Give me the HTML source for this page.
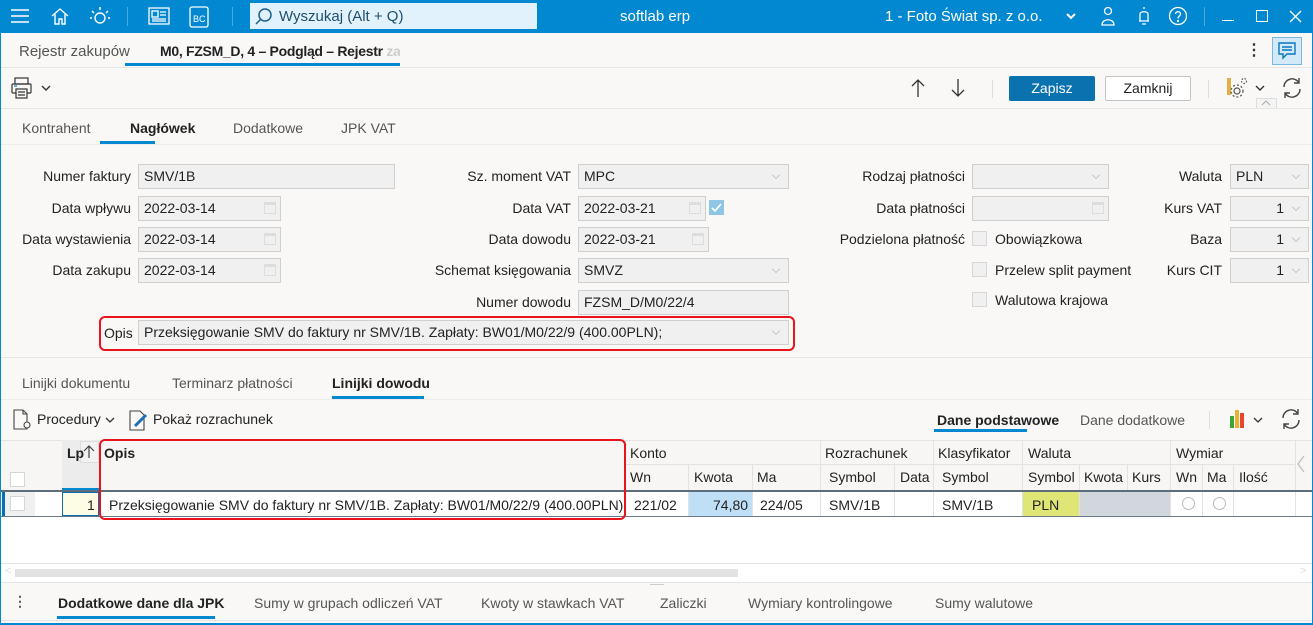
<!DOCTYPE html>
<html><head><meta charset="utf-8"><style>
*{box-sizing:border-box;margin:0;padding:0}
body{width:1313px;height:625px;overflow:hidden;background:#f9f8f7;font-family:"Liberation Sans",sans-serif;font-size:14px;color:#222;position:relative}
.a{position:absolute}
.t{position:absolute;white-space:nowrap}
.lbl{position:absolute;white-space:nowrap;text-align:right}
.f{position:absolute;background:#f0f0f0;border:1px solid #cfcfcf;height:25px;padding:3px 5px;white-space:nowrap;color:#222}
.dd:after{content:"";position:absolute;right:9px;top:7px;width:5px;height:5px;border-right:1px solid #c8c8c8;border-bottom:1px solid #c8c8c8;transform:rotate(45deg)}
.cal{position:absolute;right:4px;top:5px;width:12px;height:12px;border:1px solid #ddd;border-top:3px solid #ddd}
.cb{position:absolute;width:15px;height:15px;border:1px solid #d6d6d6;background:#f0f0f0}
.gray{color:#555}
.ul{position:absolute;height:3px;background:#0288d1}
.hl{position:absolute;height:1px;background:#e2e2e2}
.vl{position:absolute;width:1px;background:#e2e2e2}
</style></head><body>
<div class="a" style="left:0;top:0;width:1313px;height:33px;background:#0288d1"></div>
<svg class="a" style="left:10px;top:7px" width="20" height="18" stroke="#fff" stroke-width="1.6" fill="none"><path d="M1 3H19M1 9H19M1 15H19"/></svg>
<svg class="a" style="left:50px;top:6px" width="20" height="20" stroke="#fff" stroke-width="1.4" fill="none"><path d="M2 10L10 3L18 10M5 8V18H9V13H12V18H15V8"/></svg>
<svg class="a" style="left:89px;top:5px" width="22" height="22" stroke="#fff" stroke-width="1.4" fill="none"><circle cx="11" cy="13" r="5"/><path d="M11 2V5M3 6L5 8M19 6L17 8M1 13H3M19 13H21"/></svg>
<div class="a" style="left:127px;top:7px;width:1px;height:19px;background:#4aa9dd"></div>
<svg class="a" style="left:148px;top:6px" width="22" height="20" stroke="#fff" stroke-width="1.3" fill="none"><rect x="1" y="2" width="20" height="16"/><rect x="4" y="5" width="6" height="6"/><path d="M12 6H18M12 9H18M4 13H18M4 15H18"/></svg>
<svg class="a" style="left:189px;top:5px" width="22" height="24" stroke="#fff" stroke-width="1.3" fill="none"><rect x="1" y="2" width="18" height="20" rx="2"/><text x="4" y="17" fill="#fff" stroke="none" font-size="9" font-family="Liberation Sans">BC</text></svg>
<div class="a" style="left:232px;top:7px;width:1px;height:19px;background:#4aa9dd"></div>
<div class="a" style="left:250px;top:3px;width:287px;height:26px;background:#e1f2fc"></div>
<svg class="a" style="left:255px;top:7px" width="18" height="18" stroke="#1a5f8c" stroke-width="1.5" fill="none"><circle cx="10" cy="8" r="6"/><path d="M6 12L1 17"/></svg>
<div class="t" style="left:279px;top:8px;color:#1e4e6e;font-size:15px">Wyszukaj (Alt + Q)</div>
<div class="t" style="left:620px;top:8px;color:#fff;font-size:15px">softlab erp</div>
<div class="t" style="left:885px;top:8px;color:#fff;font-size:15px">1 - Foto Świat sp. z o.o.</div>
<svg class="a" style="left:1066px;top:12px" width="10" height="8" stroke="#fff" stroke-width="2" fill="none"><path d="M1 2L5 6L9 2"/></svg>
<svg class="a" style="left:1100px;top:5px" width="16" height="22" stroke="#fff" stroke-width="1.3" fill="none"><circle cx="8" cy="6" r="3.5"/><path d="M2 20C2 13 14 13 14 20Z"/></svg>
<svg class="a" style="left:1136px;top:5px" width="16" height="22" stroke="#fff" stroke-width="1.3" fill="none"><path d="M8 2V4M4 16V9C4 6 12 6 12 9V16H3M13 16H12M6 19H10"/></svg>
<svg class="a" style="left:1168px;top:6px" width="20" height="20" stroke="#fff" stroke-width="1.3" fill="none"><circle cx="10" cy="10" r="8.5"/><path d="M7.5 8C7.5 5 12.5 5 12.5 8C12.5 10 10 10 10 12.5"/><circle cx="10" cy="15" r=".5"/></svg>
<div class="a" style="left:1204px;top:7px;width:1px;height:19px;background:#4aa9dd"></div>
<div class="a" style="left:1222px;top:20px;width:12px;height:1px;background:#fff"></div>
<div class="a" style="left:1256px;top:10px;width:12px;height:12px;border:1.3px solid #fff"></div>
<svg class="a" style="left:1289px;top:10px" width="13" height="13" stroke="#fff" stroke-width="1.3"><path d="M1 1L12 12M12 1L1 12"/></svg>
<div class="a" style="left:0;top:33px;width:1px;height:592px;background:#0288d1"></div>
<div class="a" style="left:1312px;top:33px;width:1px;height:592px;background:#0288d1"></div>
<div class="a" style="left:0;top:623px;width:1313px;height:2px;background:#0288d1"></div>
<div class="t gray" style="left:19px;top:43px;font-size:15px">Rejestr zakupów</div>
<div class="t" style="left:160px;top:43px;width:240px;overflow:hidden;font-size:14px;font-weight:bold;color:#222;letter-spacing:-0.3px">M0, FZSM_D, 4 – Podgląd – Rejestr <span style="color:#ccc">zak</span></div>
<div class="ul" style="left:125px;top:63px;width:275px"></div>
<div class="hl" style="left:1px;top:67px;width:1311px;background:#e6e6e6"></div>
<div class="t" style="left:1246px;top:40px;font-size:16px;color:#333;font-weight:bold">⋮</div>
<div class="a" style="left:1272px;top:37px;width:30px;height:28px;background:#d3e9f7;border:1px solid #7bb8dd"></div>
<svg class="a" style="left:1278px;top:42px" width="18" height="18" stroke="#0a77bf" stroke-width="1.4" fill="none"><path d="M1 1H17V12H9L5 16V12H1Z M4 5H14M4 8H14"/></svg>
<svg class="a" style="left:10px;top:76px" width="24" height="24" stroke="#333" stroke-width="1.2" fill="none"><rect x="5" y="2" width="13" height="6"/><rect x="2" y="8" width="19" height="9" rx="1"/><rect x="6" y="13" width="11" height="9" fill="#f9f8f7"/><path d="M8 16H15M8 19H15"/><path d="M4 10H7" stroke="#0288d1"/></svg>
<svg class="a" style="left:41px;top:84px" width="10" height="8" stroke="#333" stroke-width="1.4" fill="none"><path d="M1 2L5 6L9 2"/></svg>
<svg class="a" style="left:911px;top:78px" width="14" height="20" stroke="#333" stroke-width="1.3" fill="none"><path d="M7 19V2M1 8L7 2L13 8"/></svg>
<svg class="a" style="left:951px;top:78px" width="14" height="20" stroke="#333" stroke-width="1.3" fill="none"><path d="M7 1V18M1 12L7 18L13 12"/></svg>
<div class="a" style="left:992px;top:80px;width:1px;height:18px;background:#ddd"></div>
<div class="a" style="left:1009px;top:76px;width:86px;height:25px;background:#0b72b0;border-radius:2px;color:#fff;text-align:center;line-height:25px;font-size:14px">Zapisz</div>
<div class="a" style="left:1105px;top:76px;width:86px;height:25px;background:#fff;border:1px solid #c4c4c4;border-radius:2px;color:#222;text-align:center;line-height:23px;font-size:14px">Zamknij</div>
<div class="a" style="left:1208px;top:80px;width:1px;height:18px;background:#ddd"></div>
<div class="a" style="left:1227px;top:78px;width:4px;height:17px;background:#e2b046"></div>
<svg class="a" style="left:1226px;top:76px" width="22" height="24" stroke="#555" stroke-width="1.2" fill="none"><circle cx="11" cy="15" r="3"/><circle cx="11" cy="15" r="6" stroke-dasharray="2 2"/><circle cx="18" cy="5" r="2.5" stroke-dasharray="1.5 1.5"/></svg>
<svg class="a" style="left:1255px;top:84px" width="10" height="8" stroke="#333" stroke-width="1.4" fill="none"><path d="M1 2L5 6L9 2"/></svg>
<svg class="a" style="left:1280px;top:76px" width="24" height="24" stroke="#444" stroke-width="1.4" fill="none"><path d="M4 11A8 8 0 0 1 19 7M20 13A8 8 0 0 1 5 17M19 2V7H14M5 22V17H10"/></svg>
<div class="a" style="left:1256px;top:98px;width:21px;height:10px;background:#f4f4f4;border:1px solid #ddd;border-bottom:none"></div>
<svg class="a" style="left:1261px;top:100px" width="10" height="6" stroke="#aaa" fill="none"><path d="M1 5L5 1L9 5"/></svg>
<div class="hl" style="left:1px;top:108px;width:1311px;background:#e6e6e6"></div>
<div class="t gray" style="left:22px;top:120px">Kontrahent</div>
<div class="t" style="left:130px;top:120px;font-weight:bold">Nagłówek</div>
<div class="t gray" style="left:233px;top:120px">Dodatkowe</div>
<div class="t gray" style="left:341px;top:120px">JPK VAT</div>
<div class="ul" style="left:100px;top:141px;width:55px"></div>
<div class="hl" style="left:1px;top:144px;width:1311px;background:#ececec"></div>
<div class="lbl" style="right:1182px;top:168px">Numer faktury</div>
<div class="f" style="left:138px;top:164px;width:257px">SMV/1B</div>
<div class="lbl" style="right:1182px;top:200px">Data wpływu</div>
<div class="f" style="left:138px;top:196px;width:143px">2022-03-14<span class="cal"></span></div>
<div class="lbl" style="right:1182px;top:231px">Data wystawienia</div>
<div class="f" style="left:138px;top:227px;width:143px">2022-03-14<span class="cal"></span></div>
<div class="lbl" style="right:1182px;top:262px">Data zakupu</div>
<div class="f" style="left:138px;top:258px;width:143px">2022-03-14<span class="cal"></span></div>
<div class="lbl" style="right:742px;top:168px">Sz. moment VAT</div>
<div class="f dd" style="left:578px;top:164px;width:211px">MPC</div>
<div class="lbl" style="right:742px;top:200px">Data VAT</div>
<div class="f" style="left:578px;top:196px;width:128px">2022-03-21<span class="cal"></span></div>
<div class="a" style="left:709px;top:200px;width:15px;height:15px;background:#8fc6e6"></div>
<svg class="a" style="left:710px;top:201px" width="13" height="13" stroke="#fff" stroke-width="1.6" fill="none"><path d="M2 7L5 10L11 3"/></svg>
<div class="lbl" style="right:742px;top:231px">Data dowodu</div>
<div class="f" style="left:578px;top:227px;width:131px">2022-03-21<span class="cal"></span></div>
<div class="lbl" style="right:742px;top:262px">Schemat księgowania</div>
<div class="f dd" style="left:578px;top:258px;width:211px">SMVZ</div>
<div class="lbl" style="right:742px;top:294px">Numer dowodu</div>
<div class="f" style="left:578px;top:290px;width:211px">FZSM_D/M0/22/4</div>
<div class="a" style="left:99px;top:316px;width:696px;height:35px;border:2px solid #e8131b;border-radius:6px"></div>
<div class="t" style="left:104px;top:325px">Opis</div>
<div class="f dd" style="left:138px;top:320px;width:651px">Przeksięgowanie SMV do faktury nr SMV/1B. Zapłaty: BW01/M0/22/9 (400.00PLN);</div>
<div class="lbl" style="right:348px;top:168px">Rodzaj płatności</div>
<div class="f dd" style="left:972px;top:164px;width:137px"></div>
<div class="lbl" style="right:348px;top:200px">Data płatności</div>
<div class="f" style="left:972px;top:196px;width:137px"><span class="cal"></span></div>
<div class="lbl" style="right:348px;top:231px">Podzielona płatność</div>
<div class="cb" style="left:972px;top:231px"></div><div class="t" style="left:995px;top:231px">Obowiązkowa</div>
<div class="cb" style="left:972px;top:262px"></div><div class="t" style="left:995px;top:262px">Przelew split payment</div>
<div class="cb" style="left:972px;top:292px"></div><div class="t" style="left:995px;top:292px">Walutowa krajowa</div>
<div class="lbl" style="right:91px;top:168px">Waluta</div>
<div class="f dd" style="left:1230px;top:164px;width:79px">PLN</div>
<div class="lbl" style="right:91px;top:200px">Kurs VAT</div>
<div class="f dd" style="left:1230px;top:196px;width:79px;text-align:right;padding-right:24px">1</div>
<div class="lbl" style="right:91px;top:231px">Baza</div>
<div class="f dd" style="left:1230px;top:227px;width:79px;text-align:right;padding-right:24px">1</div>
<div class="lbl" style="right:91px;top:262px">Kurs CIT</div>
<div class="f dd" style="left:1230px;top:258px;width:79px;text-align:right;padding-right:24px">1</div>
<div class="hl" style="left:1px;top:357px;width:1311px;background:#e6e6e6"></div>
<div class="t gray" style="left:22px;top:375px">Linijki dokumentu</div>
<div class="t gray" style="left:172px;top:375px">Terminarz płatności</div>
<div class="t" style="left:332px;top:375px;font-weight:bold">Linijki dowodu</div>
<div class="ul" style="left:332px;top:396px;width:92px"></div>
<div class="hl" style="left:1px;top:399px;width:1311px;background:#ececec"></div>
<svg class="a" style="left:12px;top:409px" width="22" height="22" stroke="#444" stroke-width="1.1" fill="none"><path d="M2 1H11L15 5V20H2Z M11 1V5H15"/><circle cx="15" cy="16" r="3" fill="#f9f8f7"/></svg>
<div class="t" style="left:37px;top:411px">Procedury</div>
<svg class="a" style="left:105px;top:416px" width="10" height="8" stroke="#333" stroke-width="1.3" fill="none"><path d="M1 2L5 6L9 2"/></svg>
<svg class="a" style="left:128px;top:408px" width="22" height="24" stroke="#444" stroke-width="1.1" fill="none"><path d="M2 3H12L16 7V22H2Z"/><path d="M7 18L18 7" stroke="#1d6fb8" stroke-width="3"/></svg>
<div class="t" style="left:153px;top:411px">Pokaż rozrachunek</div>
<div class="t" style="left:937px;top:412px;font-weight:bold">Dane podstawowe</div>
<div class="ul" style="left:934px;top:429px;width:93px"></div>
<div class="t gray" style="left:1080px;top:412px">Dane dodatkowe</div>
<div class="a" style="left:1209px;top:411px;width:1px;height:18px;background:#ddd"></div>
<div class="a" style="left:1230px;top:416px;width:4px;height:12px;background:#3ba53b"></div>
<div class="a" style="left:1235px;top:410px;width:4px;height:18px;background:#e8b330"></div>
<div class="a" style="left:1240px;top:413px;width:4px;height:15px;background:#e8452f"></div>
<svg class="a" style="left:1253px;top:416px" width="10" height="8" stroke="#333" stroke-width="1.3" fill="none"><path d="M1 2L5 6L9 2"/></svg>
<svg class="a" style="left:1279px;top:407px" width="24" height="24" stroke="#444" stroke-width="1.4" fill="none"><path d="M4 11A8 8 0 0 1 19 7M20 13A8 8 0 0 1 5 17M19 2V7H14M5 22V17H10"/></svg>
<div class="a" style="left:1px;top:440px;width:1311px;height:51px;background:#f7f6f5"></div>
<div class="a" style="left:1px;top:491px;width:1311px;height:72px;background:#fff"></div>
<div class="hl" style="left:1px;top:440px;width:1311px;background:#e4e4e4"></div>
<div class="a" style="left:62px;top:440px;width:37px;height:50px;background:#ececec"></div>
<div class="a" style="left:62px;top:488px;width:37px;height:3px;background:#0288d1"></div>
<div class="a" style="left:80px;top:441px;width:19px;height:22px;background:#f2f2f2;border:1px solid #ddd"></div>
<div class="t" style="left:67px;top:445px;font-weight:bold">Lp</div>
<svg class="a" style="left:83px;top:445px" width="12" height="14" stroke="#444" stroke-width="1.2" fill="none"><path d="M6 13V1M1 6L6 1L11 6"/></svg>
<div class="cb" style="left:10px;top:472px;background:#fff"></div>
<div class="t" style="left:104px;top:445px;font-weight:bold">Opis</div>
<div class="t" style="left:630px;top:445px">Konto</div>
<div class="t" style="left:825px;top:445px">Rozrachunek</div>
<div class="t" style="left:938px;top:445px">Klasyfikator</div>
<div class="t" style="left:1028px;top:445px">Waluta</div>
<div class="t" style="left:1176px;top:445px">Wymiar</div>
<div class="hl" style="left:625px;top:464px;width:670px"></div>
<div class="t" style="left:630px;top:469px">Wn</div>
<div class="t" style="left:694px;top:469px">Kwota</div>
<div class="t" style="left:757px;top:469px">Ma</div>
<div class="t" style="left:829px;top:469px">Symbol</div>
<div class="t" style="left:900px;top:469px">Data</div>
<div class="t" style="left:942px;top:469px">Symbol</div>
<div class="t" style="left:1028px;top:469px">Symbol</div>
<div class="t" style="left:1084px;top:469px">Kwota</div>
<div class="t" style="left:1132px;top:469px">Kurs</div>
<div class="t" style="left:1176px;top:469px">Wn</div>
<div class="t" style="left:1207px;top:469px">Ma</div>
<div class="t" style="left:1239px;top:469px">Ilość</div>
<svg class="a" style="left:1296px;top:455px" width="10" height="18" stroke="#bbb" stroke-width="1.2" fill="none"><path d="M8 1L2 9L8 17"/></svg>
<div class="vl" style="left:625px;top:440px;height:77px"></div>
<div class="vl" style="left:688px;top:464px;height:53px"></div>
<div class="vl" style="left:752px;top:464px;height:53px"></div>
<div class="vl" style="left:820px;top:440px;height:77px"></div>
<div class="vl" style="left:894px;top:464px;height:53px"></div>
<div class="vl" style="left:933px;top:440px;height:77px"></div>
<div class="vl" style="left:1022px;top:440px;height:77px"></div>
<div class="vl" style="left:1079px;top:464px;height:53px"></div>
<div class="vl" style="left:1127px;top:464px;height:53px"></div>
<div class="vl" style="left:1170px;top:440px;height:77px"></div>
<div class="vl" style="left:1202px;top:464px;height:53px"></div>
<div class="vl" style="left:1233px;top:464px;height:53px"></div>
<div class="vl" style="left:1295px;top:440px;height:77px"></div>
<div class="a" style="left:1px;top:490px;width:1311px;height:2px;background:#5d6d7a"></div>
<div class="a" style="left:1px;top:516px;width:1311px;height:1px;background:#6b7a86"></div>
<div class="a" style="left:2px;top:492px;width:3px;height:24px;background:#0a6fb0"></div>
<div class="a" style="left:5px;top:492px;width:30px;height:24px;background:#f0f0f0"></div>
<div class="cb" style="left:10px;top:496px;background:#fff"></div>
<div class="a" style="left:62px;top:492px;width:37px;height:24px;background:#fdfde6;border:1.5px solid #0a6fb0"></div>
<div class="t" style="left:87px;top:497px">1</div>
<div class="t" style="left:109px;top:497px">Przeksięgowanie SMV do faktury nr SMV/1B. Zapłaty: BW01/M0/22/9 (400.00PLN);</div>
<div class="t" style="left:634px;top:497px">221/02</div>
<div class="a" style="left:689px;top:492px;width:63px;height:24px;background:#bfdff7"></div>
<div class="t" style="left:713px;top:497px">74,80</div>
<div class="t" style="left:760px;top:497px">224/05</div>
<div class="t" style="left:829px;top:497px">SMV/1B</div>
<div class="t" style="left:942px;top:497px">SMV/1B</div>
<div class="a" style="left:1023px;top:492px;width:56px;height:24px;background:#dfe676"></div>
<div class="t" style="left:1032px;top:497px">PLN</div>
<div class="a" style="left:1080px;top:492px;width:90px;height:24px;background:#d1d7dd"></div>
<div class="a" style="left:1182px;top:497px;width:13px;height:13px;border:1px solid #bbb;border-radius:50%"></div>
<div class="a" style="left:1213px;top:497px;width:13px;height:13px;border:1px solid #bbb;border-radius:50%"></div>
<div class="a" style="left:99px;top:439px;width:527px;height:81px;border:2px solid #e8131b;border-radius:6px"></div>
<div class="hl" style="left:1px;top:563px;width:1311px;background:#e4e4e4"></div>
<div class="a" style="left:1px;top:564px;width:1311px;height:18px;background:#fff"></div>
<div class="a" style="left:15px;top:569px;width:723px;height:8px;background:#e2e2e2"></div>
<div class="t" style="left:5px;top:565px;color:#ddd;font-size:11px">&lt;</div>
<div class="t" style="left:1300px;top:565px;color:#ddd;font-size:11px">&gt;</div>
<div class="hl" style="left:1px;top:582px;width:1311px;background:#e4e4e4"></div>
<div class="a" style="left:650px;top:584px;width:14px;height:1px;background:#ccc"></div>
<div class="t" style="left:13px;top:593px;font-weight:bold;color:#555">⋮</div>
<div class="t" style="left:58px;top:595px;font-weight:bold">Dodatkowe dane dla JPK</div>
<div class="t gray" style="left:254px;top:595px">Sumy w grupach odliczeń VAT</div>
<div class="t gray" style="left:481px;top:595px">Kwoty w stawkach VAT</div>
<div class="t gray" style="left:660px;top:595px">Zaliczki</div>
<div class="t gray" style="left:748px;top:595px">Wymiary kontrolingowe</div>
<div class="t gray" style="left:935px;top:595px">Sumy walutowe</div>
<div class="ul" style="left:57px;top:616px;width:158px"></div>
<div class="hl" style="left:1px;top:620px;width:1311px;background:#e4e4e4"></div>
</body></html>
